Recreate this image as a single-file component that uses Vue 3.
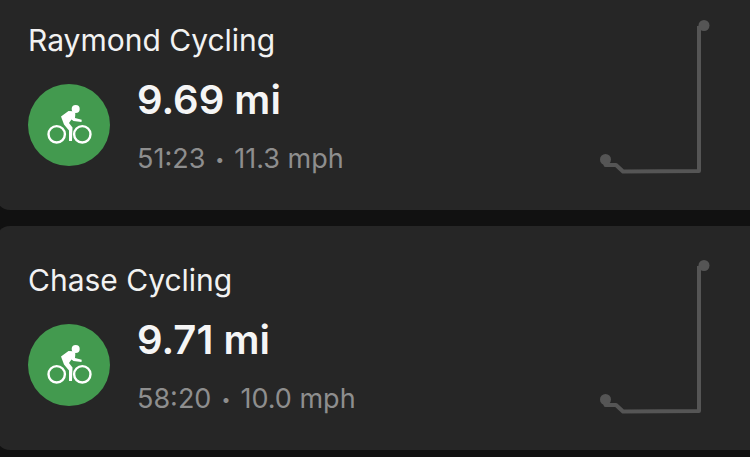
<script setup>
const workouts = [
	{ id: 1, title: "Raymond Cycling", distance: "9.69 mi", time: "51:23", speed: "11.3 mph" },
	{ id: 2, title: "Chase Cycling", distance: "9.71 mi", time: "58:20", speed: "10.0 mph" },
];
</script>

<template>
	<div class="page">
		<div class="card" v-for="item in workouts" :key="item.id">
			<h2 class="title">{{ item.title }}</h2>
			<div class="row">
				<div class="badge">
					<svg width="82" height="82" viewBox="0 0 82 82">
						<circle cx="47.700" cy="25" r="4" fill="#fff" />
						<path d="M33 32.500 L40.500 27 L45 27.300 Q47.500 27.800 47.300 30.500 L47 34 L53.700 35.800 L53.500 38 L45.500 37 L43.500 35.500 L41 39 L44.500 43.500 L44 57 L41 57 L41 46.500 L36 40.500 Z" fill="#fff" />
						<circle cx="28.700" cy="50.300" r="8.200" fill="none" stroke="#fff" stroke-width="2.400" />
						<circle cx="54.300" cy="50.300" r="8.200" fill="none" stroke="#fff" stroke-width="2.400" />
					</svg>
				</div>
				<div class="stats">
					<div class="distance">{{ item.distance }}</div>
					<div class="meta">{{ item.time }}<span class="dot">•</span>{{ item.speed }}</div>
				</div>
				<svg class="route" width="112" height="160" viewBox="0 0 112 160">
					<path d="M99 6 L99 151 L23 151.500 L16 145 L5.500 145 L5.500 140" fill="none" stroke="#555" stroke-width="4" stroke-linejoin="round" />
					<circle cx="104" cy="5.500" r="5.500" fill="#555" />
					<circle cx="5.500" cy="139.500" r="5.500" fill="#555" />
				</svg>
			</div>
		</div>
	</div>
</template>

<style scoped>
.page {
	display: flex;
	flex-direction: column;
	gap: 16px;
	width: 750px;
	height: 457px;
	overflow: hidden;
	background-color: #111;
	font-family: Inter, "Liberation Sans", sans-serif;
}

/* the cards run off the screenshot on the right, and a little on the left */
.card {
	flex: none;
	position: relative;
	width: 780px;
	height: 224px;
	margin-left: -4px;
	padding: 36px 0 0 32px;
	box-sizing: border-box;
	border-radius: 14px;
	background-color: #262626;
}

.card:first-child {
	margin-top: -14px;
}

.title {
	margin: 0;
	font-size: 30px;
	font-weight: 400;
	line-height: 36px;
	color: #f2f2f2;
}

.row {
	display: flex;
	align-items: flex-start;
	margin-top: 3px;
}

.badge {
	flex: none;
	width: 82px;
	height: 82px;
	margin-top: 23px;
	border-radius: 50%;
	background-color: #439a4f;
}

.stats {
	margin-left: 27px;
	padding-top: 15px;
}

.distance {
	font-size: 40px;
	font-weight: 600;
	line-height: 48px;
	color: #f5f5f5;
}

.meta {
	margin-top: 19px;
	font-size: 27px;
	line-height: 32px;
	color: #8e8e8e;
}

.dot {
	margin: 0 10px;
	font-size: 16px;
	vertical-align: 3px;
}

.route {
	position: absolute;
	left: 604px;
	top: 34px;
}
</style>
